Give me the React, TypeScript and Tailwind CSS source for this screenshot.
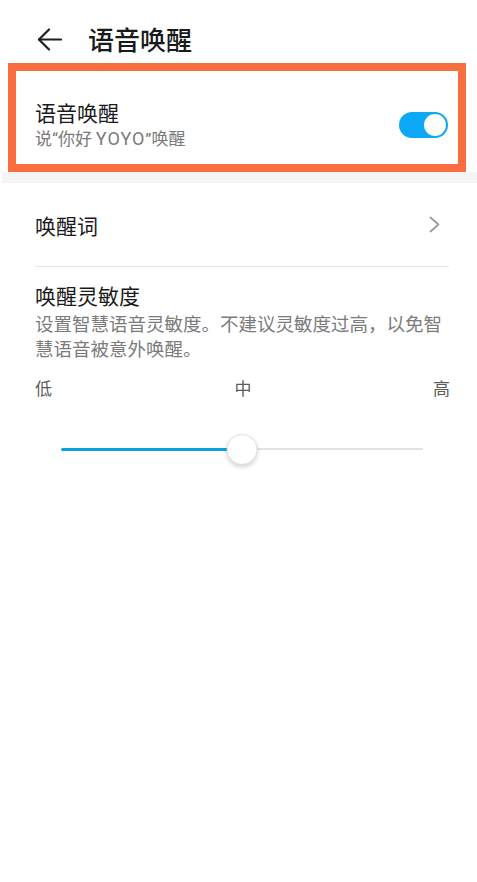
import { useState } from "react"

const font = { fontFamily: '"Noto Sans CJK SC", "Noto Sans", sans-serif' }
const latin = { fontFamily: 'Roboto, "Noto Sans", sans-serif' }

function BackArrow() {
  return (
    <svg width="25" height="23" viewBox="0 0 25 23" fill="none" stroke="#1f1f1f" strokeWidth="2.2" strokeLinecap="round" strokeLinejoin="round">
      <path d="M24 11.5H2" />
      <path d="M12 1.5L2 11.5L12 21.5" />
    </svg>
  )
}

function Toggle({ on, onChange }: { on: boolean; onChange: () => void }) {
  return (
    <button
      onClick={onChange}
      className={`flex h-[26px] w-[49px] items-center rounded-full p-[2px] ${on ? "justify-end bg-[#0aa8f5]" : "justify-start bg-[#cfcfcf]"}`}
    >
      <span className="h-[22px] w-[22px] rounded-full bg-white" />
    </button>
  )
}

export default function App() {
  const [on, setOn] = useState(true)
  const level = 0.5

  return (
    <div className="min-h-[882px] w-[477px] bg-white text-[#1a1a1a]" style={font}>
      {/* 헤더 */}
      <div className="pl-[37px] pt-[24px] pb-[9px]">
        <div className="flex h-[30px] items-center gap-[26px]">
          <BackArrow />
          <span className="text-[26px] font-medium leading-[30px]">语音唤醒</span>
        </div>
      </div>

      {/* 강조된 토글 행 */}
      <div className="ml-[8px] w-[458px] border-[8px] border-[#f86e3f]">
        <div className="flex items-center justify-between pt-[28px] pb-[14px] pl-[19px] pr-[10px]">
          <div>
            <div className="text-[21px] leading-[27px]">语音唤醒</div>
            <div className="mt-[1px] text-[17px] leading-[22px] text-[#7a7a7a]">
              说<span style={latin}>“</span>你好 <span className="text-[18px] tracking-[1px]" style={latin}>YOYO</span>
              <span style={latin}>”</span>唤醒
            </div>
          </div>
          <Toggle on={on} onChange={() => setOn(!on)} />
        </div>
      </div>
      <div className="ml-[2px] h-[11px] bg-[#f5f5f5]" />

      <div className="px-[35px]">
        {/* 唤醒词 */}
        <div className="flex h-[83px] items-center justify-between">
          <span className="pt-[2px] text-[21px] leading-[27px]">唤醒词</span>
          <svg width="11" height="17" viewBox="0 0 11 17" fill="none" stroke="#9a9a9a" strokeWidth="1.8" strokeLinecap="round" strokeLinejoin="round" className="mr-[2px]">
            <path d="M1.5 1.5L9.5 8.5L1.5 15.5" />
          </svg>
        </div>
        <div className="h-px w-[414px] bg-[#e6e6e6]" />

        {/* 唤醒灵敏度 */}
        <div className="pt-[15px]">
          <div className="text-[21px] leading-[26px]">唤醒灵敏度</div>
          <p className="mt-[3px] w-[415px] text-[18.5px] leading-[25px] text-[#7b7b7b]">
            设置智慧语音灵敏度。不建议灵敏度过高，以免智慧语音被意外唤醒。
          </p>
          <div className="mt-[15px] flex w-[415px] justify-between text-[17px] leading-[24px] text-[#5c5c5c]">
            <span>低</span>
            <span className="pl-[1px]">中</span>
            <span>高</span>
          </div>
        </div>
      </div>

      {/* 슬라이더 */}
      <div className="relative mt-[33px] ml-[61px] flex h-[32px] w-[362px] items-center">
        <div className="h-[3px] rounded-full bg-[#0aa0e8]" style={{ width: `${level * 100}%` }} />
        <div className="h-[2px] flex-1 bg-[#e3e3e3]" />
        <div
          className="absolute top-[1px] h-[31px] w-[31px] -translate-x-1/2 rounded-full border border-[#e2e2e2] bg-white shadow-[0_2px_4px_rgba(0,0,0,0.18)]"
          style={{ left: `${level * 100}%` }}
        />
      </div>
    </div>
  )
}
